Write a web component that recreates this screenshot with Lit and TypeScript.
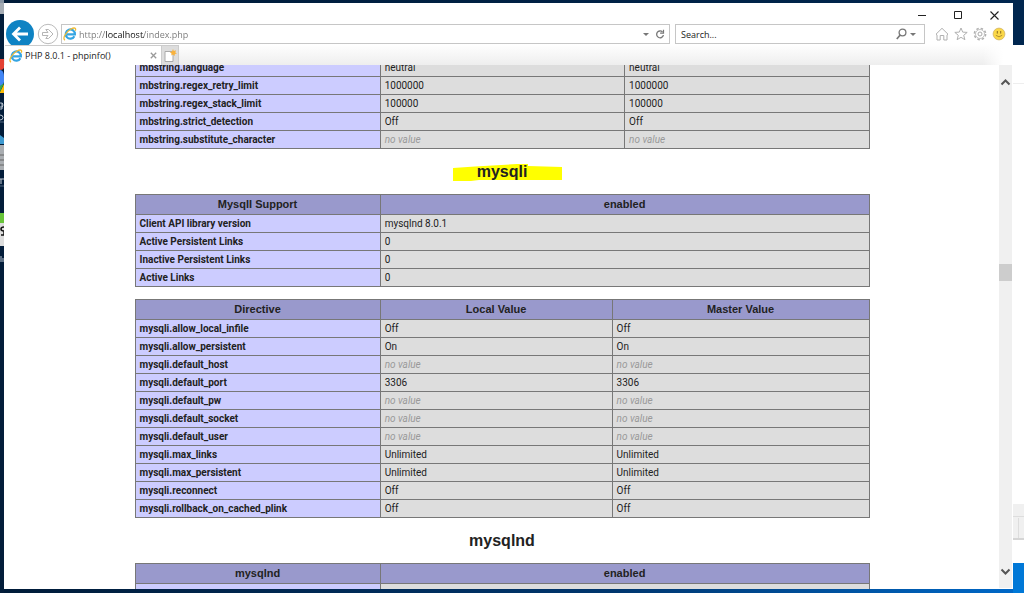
import { LitElement, html, css, svg, nothing } from "lit";
import { customElement, property } from "lit/decorators.js";

type Row = [string, ...(string | null)[]];

const MBSTRING: Row[] = [
  ["mbstring.language", "neutral", "neutral"],
  ["mbstring.regex_retry_limit", "1000000", "1000000"],
  ["mbstring.regex_stack_limit", "100000", "100000"],
  ["mbstring.strict_detection", "Off", "Off"],
  ["mbstring.substitute_character", null, null],
];

const SUPPORT: Row[] = [
  ["Client API library version", "mysqlnd 8.0.1"],
  ["Active Persistent Links", "0"],
  ["Inactive Persistent Links", "0"],
  ["Active Links", "0"],
];

const DIRECTIVES: Row[] = [
  ["mysqli.allow_local_infile", "Off", "Off"],
  ["mysqli.allow_persistent", "On", "On"],
  ["mysqli.default_host", null, null],
  ["mysqli.default_port", "3306", "3306"],
  ["mysqli.default_pw", null, null],
  ["mysqli.default_socket", null, null],
  ["mysqli.default_user", null, null],
  ["mysqli.max_links", "Unlimited", "Unlimited"],
  ["mysqli.max_persistent", "Unlimited", "Unlimited"],
  ["mysqli.reconnect", "Off", "Off"],
  ["mysqli.rollback_on_cached_plink", "Off", "Off"],
];

const ieLogo = svg`<svg class="ie" viewBox="0 0 14 14" width="14" height="14" aria-hidden="true">
  <path d="M11.4 9.200A4.600 4.600 0 1 1 11.900 7.300H4" fill="none" stroke="#35a5e2" stroke-width="2.200"/>
  <path d="M2 13.200C-1 12 2.600 5 8 2c3.600-1.900 5.400-1 4.300 1.800" fill="none" stroke="#f0bb35" stroke-width="1.300"/>
</svg>`;

@customElement("info-table")
class InfoTable extends LitElement {
  @property({ attribute: false }) head: string[] = [];
  @property({ attribute: false }) rows: Row[] = [];
  @property() layout = "thirds";

  static styles = css`
    :host { display: block; }
    table {
      width: 735px;
      max-width: 100%;
      margin: 0 auto;
      border-collapse: collapse;
      table-layout: fixed;
      font: 10px/13px Roboto, Arial, sans-serif;
      color: #222;
    }
    .key { width: 33.4%; }
    .thirds .mid { width: 33.3%; }
    .wide .mid { width: 31.6%; }
    th, td {
      box-sizing: border-box;
      height: 18px;
      padding: 0 4px;
      border: 1px solid #777;
      text-align: left;
      vertical-align: middle;
    }
    thead th {
      height: 20px;
      background: #9999cc;
      font: bold 11px/13px "Liberation Sans", Arial, sans-serif;
      text-align: center;
    }
    tbody th { background: #ccccff; font-weight: bold; }
    td { background: #dddddd; overflow-wrap: anywhere; }
    i { color: #999; }
  `;

  render() {
    const columns = this.head.length || this.rows[0].length;
    return html`<table class=${this.layout}>
      <colgroup>
        <col class="key" />
        ${columns > 2 ? html`<col class="mid" />` : nothing}
        <col />
      </colgroup>
      ${this.head.length
        ? html`<thead><tr>${this.head.map((h) => html`<th scope="col">${h}</th>`)}</tr></thead>`
        : nothing}
      <tbody>
        ${this.rows.map(
          ([key, ...values]) => html`<tr>
            <th scope="row">${key}</th>
            ${values.map((v) => html`<td>${v === null ? html`<i>no value</i>` : v}</td>`)}
          </tr>`
        )}
      </tbody>
    </table>`;
  }
}

@customElement("browser-chrome")
class BrowserChrome extends LitElement {
  static styles = css`
    :host {
      display: block;
      background: #fff;
      font: 9px/14px "Open Sans", "Noto Sans", sans-serif;
      color: #222;
    }
    svg { display: block; flex: none; }
    button { display: grid; place-items: center; padding: 0; border: 0; background: none; color: inherit; }
    .caption { display: flex; justify-content: flex-end; gap: 18px; height: 21px; padding: 2px 10px 0 0; box-sizing: border-box; }
    .caption button { width: 18px; height: 20px; }
    .bar { display: flex; align-items: center; height: 20px; padding: 0 7px 0 2px; }
    .nav { flex: none; overflow: visible; }
    .back { width: 28px; height: 28px; }
    .forward { width: 22px; height: 22px; margin: 0 2px 0 3px; }
    .field { display: flex; align-items: center; box-sizing: border-box; height: 20px; border: 1px solid #c6c6c6; background: #fff; min-width: 0; }
    .address { flex: 1; padding: 0 4px 0 1px; gap: 2px; }
    .search { flex: 0 1 250px; margin: 0 10px 0 5px; padding: 0 5px; }
    input { flex: 1; min-width: 0; height: 18px; padding: 0; border: 0; outline: 0; background: none; font: inherit; color: #222; }
    input::placeholder { color: #222; opacity: 1; }
    .url {
      color: transparent;
      background: linear-gradient(90deg, #777 0 27px, #111 27px 65px, #777 65px);
      -webkit-background-clip: text;
      background-clip: text;
    }
    .tools { display: flex; gap: 5px; }
    .tools button { width: 14px; height: 16px; }
    .tabs {
      display: flex;
      height: 21px;
      padding: 1px 0 0 1px;
      box-sizing: border-box;
      background: linear-gradient(90deg, transparent 97%, #fff 99%), linear-gradient(#fff, #eee);
    }
    .tab { position: relative; display: flex; align-items: center; gap: 2px; box-sizing: border-box; width: 156px; height: 20px; padding: 0 4px 0 4px; border-top: 1px solid #ccc; background: #fff; }
    .tab span { flex: 1; white-space: nowrap; }
    .new { width: 18px; height: 20px; border: 1px solid #ccc; border-bottom: 0; background: #ddd; box-sizing: border-box; }
  `;

  render() {
    return html`
      <div class="caption">
        <button aria-label="Minimize"><svg width="8" height="9" viewBox="0 0 8 9"><path d="M0 4.500h8" stroke="#222"/></svg></button>
        <button aria-label="Maximize"><svg width="9" height="9" viewBox="0 0 9 9"><path d="M.5 .5h7v7h-7z" fill="none" stroke="#222"/></svg></button>
        <button aria-label="Close"><svg width="9" height="9" viewBox="0 0 9 9"><path d="M.5.5l8 8M8.500.5l-8 8" stroke="#222" stroke-width="1.100"/></svg></button>
      </div>
      <div class="bar">
        <button class="nav back" aria-label="Back">
          <svg width="28" height="28" viewBox="0 0 28 28"><circle cx="14" cy="14" r="14" fill="#0f83c3"/><path d="M22 14H8M14 7.500L7.500 14l6.500 6.500" fill="none" stroke="#fff" stroke-width="2.800"/></svg>
        </button>
        <button class="nav forward" aria-label="Forward">
          <svg width="22" height="22" viewBox="0 0 22 22"><circle cx="11" cy="11" r="9.700" fill="#fff" stroke="#bbb"/><path d="M5.500 9.500h5.500L8.800 6.500h2.700l4.500 4.500-4.500 4.500H8.800l2.200-3H5.500z" fill="#fff" stroke="#b5b5b5"/></svg>
        </button>
        <div class="field address">
          ${ieLogo}
          <input class="url" aria-label="Address" value="http://localhost/index.php" />
          <button aria-label="Show addresses"><svg width="14" height="8" viewBox="0 0 14 8"><path d="M4 3h6L7 6z" fill="#777"/></svg></button>
          <button aria-label="Refresh"><svg width="10" height="11" viewBox="0 0 10 11"><path d="M7.500 3A3.400 3.400 0 1 0 8.400 6" fill="none" stroke="#777" stroke-width="1.300"/><path d="M8.500.8v3.400H5.100" fill="none" stroke="#777" stroke-width="1.200"/></svg></button>
        </div>
        <div class="field search">
          <input aria-label="Search" placeholder="Search..." />
          <button aria-label="Search"><svg width="11" height="12" viewBox="0 0 11 12"><circle cx="6.500" cy="4.500" r="3.400" fill="none" stroke="#777" stroke-width="1.300"/><path d="M4.200 7L.8 11" stroke="#777" stroke-width="1.700"/></svg></button>
          <button aria-label="Search options"><svg width="12" height="8" viewBox="0 0 12 8"><path d="M3 3h6L6 6z" fill="#777"/></svg></button>
        </div>
        <div class="tools">
          <button aria-label="Home"><svg width="14" height="14" viewBox="0 0 14 14"><path d="M1 7.200L7 1.300l6 5.900-1 .8v5H8.800V8.500H5.200V13H2V8z" fill="#fff" stroke="#b0b0b0"/></svg></button>
          <button aria-label="Favorites"><svg width="14" height="14" viewBox="0 0 14 14"><path d="M7 1l1.700 4.100 4.500.3-3.500 2.900 1.200 4.400L7 10.300l-3.900 2.400 1.200-4.400L.8 5.400l4.500-.3z" fill="#fff" stroke="#b0b0b0"/></svg></button>
          <button aria-label="Tools"><svg width="14" height="14" viewBox="0 0 14 14"><circle cx="7" cy="7" r="5.600" fill="none" stroke="#b0b0b0" stroke-width="1.600" stroke-dasharray="2.400 2"/><circle cx="7" cy="7" r="4.500" fill="#fff" stroke="#b5b5b5" stroke-width=".8"/><circle cx="7" cy="7" r="2" fill="none" stroke="#aaa"/></svg></button>
          <button aria-label="Send feedback"><svg width="14" height="14" viewBox="0 0 14 14"><circle cx="7" cy="7" r="5.900" fill="#fbd848" stroke="#d0b468" stroke-width=".8"/><path d="M5.300 4v2.600M8.700 4v2.600" stroke="#8a6c20"/><path d="M3.800 8.300q3.200 3 6.400 0" fill="none" stroke="#b29030"/></svg></button>
        </div>
      </div>
      <div class="tabs">
        <div class="tab">
          ${ieLogo}<span>PHP 8.0.1 - phpinfo()</span>
          <button aria-label="Close tab"><svg width="7" height="7" viewBox="0 0 7 7"><path d="M.8.8l5.400 5.400M6.200.8L.8 6.200" stroke="#999" stroke-width="1.300"/></svg></button>
        </div>
        <button class="new" aria-label="New tab"><svg width="14" height="14" viewBox="0 0 14 14"><path d="M2 2.500h7l1 1v9H2z" fill="#fff" stroke="#aaa"/><path d="M10 0l.8 2 2.200-.7-.7 2.100 1.700 1.200-2.100.4L11.500 7 10 5.500 8.300 6.400 8.500 4.400 6.800 3l2.200-.6z" fill="#f9b23c"/></svg></button>
      </div>
    `;
  }
}

@customElement("app-root")
class AppRoot extends LitElement {
  static styles = css`
    :host {
      display: grid;
      grid-template-columns: 4px minmax(0, 1fr) 11px;
      height: 100vh;
      overflow: hidden;
      background:
        linear-gradient(90deg, #001b38, #00264f) top / 100% 3px no-repeat,
        linear-gradient(90deg, #001b38, #00366e 60%, #0069c9);
    }
    svg { display: block; }
    .desktop { background: #031d3a; overflow: hidden; }
    .window { display: flex; flex-direction: column; min-height: 0; margin: 3px 0 4px; background: #fff; }
    .view { flex: 1; display: flex; min-height: 0; }
    .page { flex: 1; min-width: 0; overflow: hidden; padding-left: 1px; }
    .doc { margin-top: -7px; }
    h2 { margin: 13px 0; text-align: center; font: bold 16px/19px "Liberation Sans", Arial, sans-serif; color: #222; }
    .mark { position: relative; }
    .mark svg { position: absolute; z-index: -1; left: 50%; top: 2px; margin-left: -49px; }
    .doc { position: relative; z-index: 0; }
    .gap { margin-bottom: 12px; }
    .scroll { display: flex; flex-direction: column; align-items: center; width: 13px; margin: 0 1px 1px 0; background: #f0f0f0; }
    .scroll button { display: grid; place-items: center; flex: none; width: 13px; height: 33px; padding: 0; border: 0; background: none; }
    .track { flex: 1; display: flex; flex-direction: column; align-self: stretch; }
    .before { flex: 166; }
    .thumb { flex: 17; background: #cdcdcd; }
    .after { flex: 275; }
    .behind { display: flex; flex-direction: column; }
    .sky { height: 45px; background: #00264f; }
    .white { flex: 1; background: linear-gradient(#eee, #eee) 0 38px / 100% 1px no-repeat #fff; }
    .status { height: 36px; border-bottom: 2px solid #d5d5d5; background: linear-gradient(90deg, transparent 5px, #ddd 5px 6px, transparent 6px) 0 14px no-repeat, linear-gradient(#ddd, #ddd) 0 12px / 100% 1px no-repeat #f0f0f0; box-sizing: border-box; }
    .base { height: 23px; background: #fff; }
    .task { height: 30px; background: #0078d7; }
  `;

  render() {
    return html`
      <div class="desktop">
        <svg width="4" height="593" viewBox="0 0 4 593" aria-hidden="true">
          <path d="M0 0h4v3H0z" fill="#8794a3"/><path d="M0 3h4v11H0z" fill="#a5acb4"/>
          <path d="M0 59h4v9q-1 2-4 2z" fill="#e34133"/><path d="M0 70q4 0 4 7v5q-1 4-4 4z" fill="#4285f4"/>
          <path d="M0 92l4-8v9H0z" fill="#fbbc05"/><path d="M0 86l4-3-4 9z" fill="#34a853"/>
          <path d="M0 103q3-1 3 2t-3 2M2 103v6H0M0 115q3 0 3 2.500T0 120" fill="none" stroke="#b9c4d0"/>
          <path d="M0 122h4M0 186h4" stroke="#52677f"/>
          <path d="M0 135l4 3v6H0z" fill="#3e9ad0"/><path d="M0 145h4v25H0z" fill="#a9adb1"/><path d="M0 155h4M0 160h4M0 165h4" stroke="#666"/>
          <path d="M0 179h4M1 179v5" stroke="#c5ccd4"/>
          <path d="M0 213h4v10H0z" fill="#68c43a"/><path d="M0 223h4v23H0z" fill="#dcdcdc"/><path d="M4 227q-3 0-3 2t3 2v4H1" fill="none" stroke="#111" stroke-width="1.500"/>
          <path d="M1 256v6M3 258v4" stroke="#b9c4d0"/>
        </svg>
      </div>
      <main class="window">
        <browser-chrome></browser-chrome>
        <div class="view">
          <div class="page">
            <div class="doc">
              <info-table .rows=${MBSTRING}></info-table>
              <h2 class="mark">
                <svg width="109" height="17" viewBox="0 0 109 17" aria-hidden="true"><path d="M0 4l22-1.500L64 0h11v2l34 1v13H26l-8 1H0z" fill="#ff0"/></svg>mysqli
              </h2>
              <info-table class="gap" .head=${["MysqlI Support", "enabled"]} .rows=${SUPPORT}></info-table>
              <info-table layout="wide" .head=${["Directive", "Local Value", "Master Value"]} .rows=${DIRECTIVES}></info-table>
              <h2>mysqlnd</h2>
              <info-table .head=${["mysqlnd", "enabled"]} .rows=${[["", ""]]}></info-table>
            </div>
          </div>
          <div class="scroll">
            <button aria-label="Scroll up"><svg width="11" height="8" viewBox="0 0 11 8"><path d="M1.500 6.500l4-4 4 4" fill="none" stroke="#555" stroke-width="2"/></svg></button>
            <div class="track"><div class="before"></div><div class="thumb"></div><div class="after"></div></div>
            <button aria-label="Scroll down"><svg width="11" height="8" viewBox="0 0 11 8"><path d="M1.500 1.500l4 4 4-4" fill="none" stroke="#555" stroke-width="2"/></svg></button>
          </div>
        </div>
      </main>
      <div class="behind" aria-hidden="true">
        <div class="sky"></div><div class="white"></div><div class="status"></div><div class="base"></div><div class="task"></div>
      </div>
    `;
  }
}
